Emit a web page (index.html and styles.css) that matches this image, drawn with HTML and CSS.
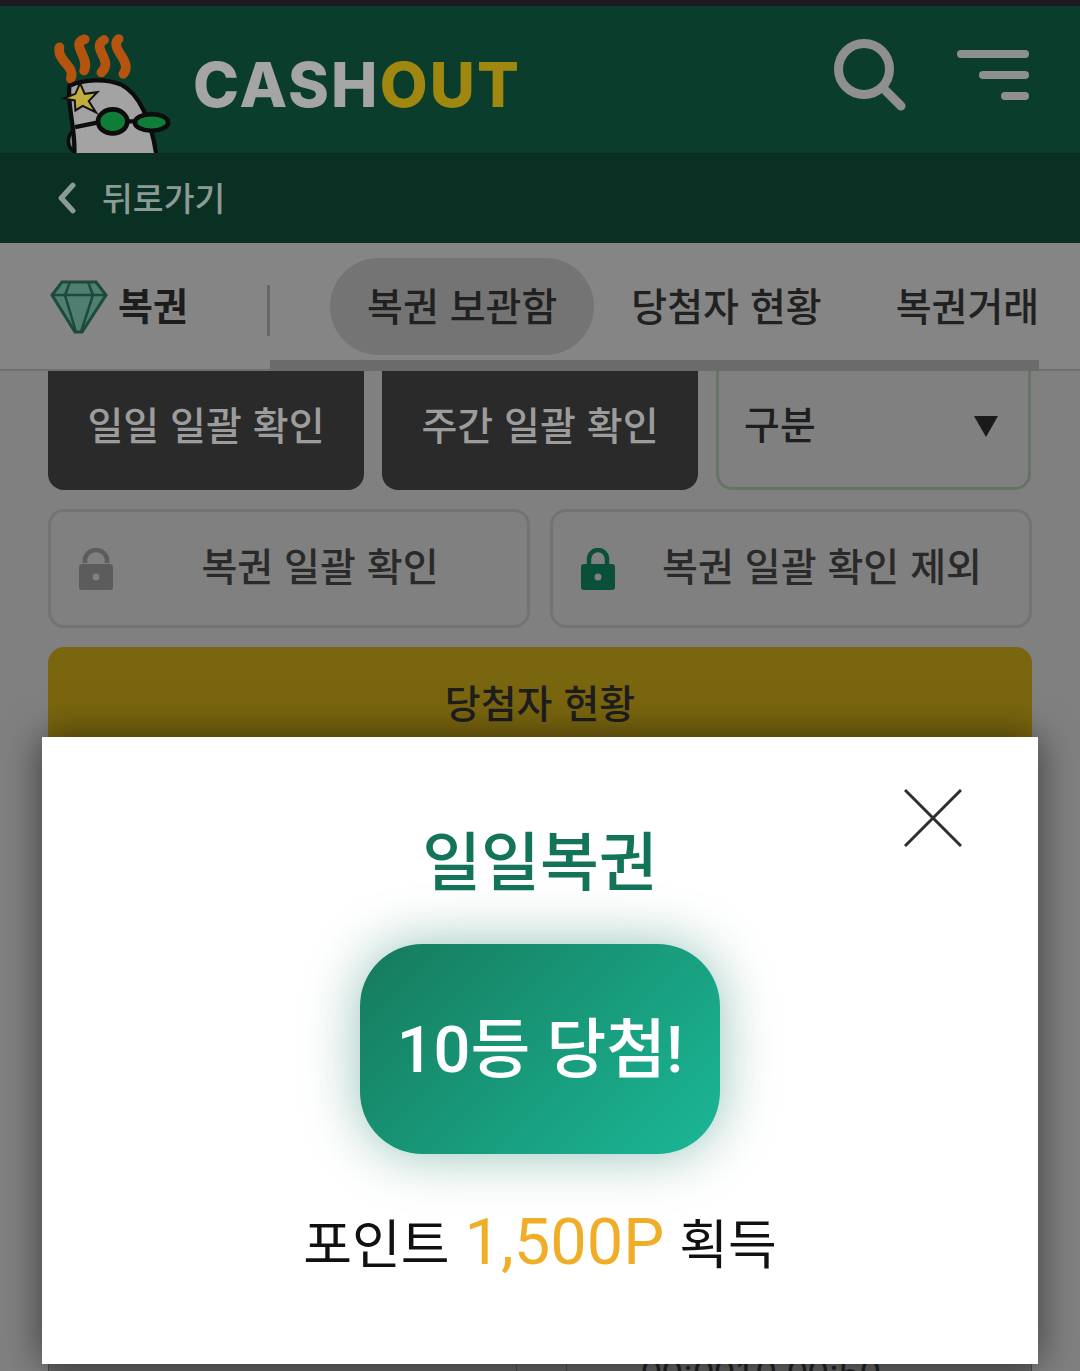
FILE: index.html
```html
<!DOCTYPE html>
<html lang="ko">
<head>
    <meta charset="UTF-8">
    <meta name="viewport" content="width=device-width, initial-scale=1.0">
    <title>CASHOUT 복권</title>
    <link rel="stylesheet" href="styles.css">
</head>
<body>
    <div class="page">
        <div class="status-strip"></div>

        <header class="site-header">
            <svg class="goose" viewBox="0 0 420 400" aria-hidden="true">
                <g fill="none" stroke="#b4540f" stroke-width="29" stroke-linecap="round">
                    <path d="M58 82C48 122 108 140 92 176"/>
                    <path d="M134 58C88 70 152 115 132 152"/>
                    <path d="M192 60C150 85 224 120 184 158"/>
                    <path d="M236 57C205 85 282 125 250 162"/>
                </g>
                <path class="goose-arm" d="M118 400C70 390 80 340 110 325Z"/>
                <path class="goose-head" d="M102 410C110 340 80 260 88 198C130 178 200 175 245 195C295 220 335 300 350 410Z"/>
                <path class="goose-star" d="M120 190L134 222L172 217L146 244L168 278L128 258L106 272L104 242L70 236L106 222Z"/>
                <path class="goose-wire" d="M105 322L175 308M260 305L285 305"/>
                <ellipse class="goose-lens" cx="218" cy="305" rx="44" ry="36"/>
                <ellipse class="goose-lens" cx="335" cy="308" rx="50" ry="25"/>
            </svg>
            <div class="wordmark">CASH<span class="wordmark-out">OUT</span></div>
            <div class="header-actions">
                <svg class="icon-search" viewBox="0 0 72 72" aria-hidden="true">
                    <circle cx="30" cy="30" r="25.5"/>
                    <path d="M51 51L67 67"/>
                </svg>
                <div class="menu-lines">
                    <span class="menu-line menu-line-long"></span>
                    <span class="menu-line menu-line-mid"></span>
                    <span class="menu-line menu-line-short"></span>
                </div>
            </div>
        </header>

        <nav class="back-bar">
            <svg class="icon-back" viewBox="0 0 18 30" aria-hidden="true">
                <path d="M15 3L4 15L15 27"/>
            </svg>
            <span class="back-label">뒤로가기</span>
        </nav>

        <section class="tab-bar">
            <div class="tab-brand">
                <svg class="icon-gem" viewBox="0 0 80 75" aria-hidden="true">
                    <path class="gem-body" d="M22 13H56L66 26L42 63H35L12 26Z"/>
                    <path class="gem-lines" d="M12 26H66M30 13L25 26L36 63M48 13L53 26L41 63"/>
                </svg>
                <strong>복권</strong>
            </div>
            <div class="tab-list">
                <span class="tab tab-active">복권 보관함</span>
                <span class="tab">당첨자 현황</span>
                <span class="tab">복권거래</span>
            </div>
        </section>

        <main class="content">
            <div class="filter-row">
                <button class="dark-btn" type="button">일일 일괄 확인</button>
                <button class="dark-btn" type="button">주간 일괄 확인</button>
                <div class="select-box">
                    <span class="select-label">구분</span>
                    <span class="select-arrow"></span>
                </div>
            </div>

            <div class="lock-row">
                <button class="lock-btn" type="button">
                    <svg class="icon-lock lock-open" viewBox="0 0 34 42" aria-hidden="true">
                        <path class="lock-shackle" d="M6 15V12A11 10 0 0 1 28 12V15"/>
                        <rect class="lock-case" y="16" width="34" height="26" rx="3"/>
                        <circle class="lock-hole" cx="17" cy="29" r="3.5"/>
                    </svg>
                    <span class="lock-label">복권 일괄 확인</span>
                </button>
                <button class="lock-btn" type="button">
                    <svg class="icon-lock lock-closed" viewBox="0 0 34 42" aria-hidden="true">
                        <path class="lock-shackle" d="M8 18V11A9 9 0 0 1 26 11V18"/>
                        <rect class="lock-case" y="16" width="34" height="26" rx="3"/>
                        <circle class="lock-hole" cx="17" cy="29" r="3.5"/>
                    </svg>
                    <span class="lock-label">복권 일괄 확인 제외</span>
                </button>
            </div>

            <div class="winners">
                <div class="winners-head">당첨자 현황</div>
                <div class="winners-row">
                    <span></span>
                    <span></span>
                    <span class="winners-time">00:0010 00:50</span>
                </div>
            </div>
        </main>

        <div class="prize-modal">
            <svg class="modal-close" viewBox="0 0 58 58" aria-hidden="true">
                <path d="M1 1L57 57M57 1L1 57"/>
            </svg>
            <h2 class="prize-title">일일복권</h2>
            <div class="prize-badge">10등 당첨!</div>
            <p class="prize-points">포인트 <span class="prize-amount">1,500P</span> 획득</p>
        </div>
    </div>
</body>
</html>
```

FILE: styles.css
```css
* {
    box-sizing: border-box;
}
body {
    margin: 0;
    background-color: #808080;
    font-family: "Noto Sans CJK KR", "Noto Sans", sans-serif;
    color: #242424;
}
.page {
    position: relative;
    height: 1371px;
    overflow: hidden;
}
.status-strip {
    height: 6px;
    background-color: #1d1b1f;
}

/* header */
.site-header {
    display: flex;
    align-items: flex-start;
    height: 147px;
    padding-left: 40px;
    background-color: #0b3d2d;
}
.goose {
    width: 140px;
    height: 133px;
    margin-top: 14px;
    flex: none;
}
.goose-head {
    fill: #a3a3a3;
    stroke: #0c0c0c;
    stroke-width: 13;
}
.goose-arm {
    fill: #7d8d88;
    stroke: #0c0c0c;
    stroke-width: 11;
}
.goose-star {
    fill: #c2ad3c;
    stroke: #111;
    stroke-width: 6;
}
.goose-wire {
    fill: none;
    stroke: #0c0c0c;
    stroke-width: 13;
}
.goose-lens {
    fill: #0f7d38;
    stroke: #0c0c0c;
    stroke-width: 14;
}
.wordmark {
    margin: 39px 0 0 13px;
    font-family: Inter, sans-serif;
    font-size: 62px;
    font-weight: 800;
    line-height: 80px;
    letter-spacing: 2.2px;
    color: #a5a5a5;
}
.wordmark-out {
    color: #a08810;
}
.header-actions {
    display: flex;
    align-items: flex-start;
    margin-left: auto;
    padding: 33px 51px 0 0;
}
.icon-search {
    width: 72px;
    height: 72px;
    fill: none;
    stroke: #8f8f8f;
    stroke-width: 9;
    stroke-linecap: round;
}
.menu-lines {
    display: flex;
    flex-direction: column;
    align-items: flex-end;
    gap: 13px;
    width: 72px;
    margin: 11px 0 0 51px;
}
.menu-line {
    height: 8px;
    border-radius: 4px;
    background-color: #8f8f8f;
}
.menu-line-long {
    width: 72px;
}
.menu-line-mid {
    width: 50px;
}
.menu-line-short {
    width: 28px;
}

/* back link */
.back-bar {
    display: flex;
    align-items: center;
    gap: 26px;
    height: 90px;
    padding-left: 57px;
    background-color: #0a3023;
    font-size: 33.5px;
    font-weight: 500;
    color: #8b9b95;
}
.back-label {
    margin-bottom: 4px;
}
.icon-back {
    width: 19px;
    height: 32px;
    fill: none;
    stroke: #8b9b95;
    stroke-width: 5;
    stroke-linecap: round;
    stroke-linejoin: round;
}

/* tabs */
.tab-bar {
    display: flex;
    height: 128px;
    padding-left: 40px;
    background-color: #848584;
    border-bottom: 2px solid #707070;
}
.tab-brand {
    position: relative;
    display: flex;
    align-items: center;
    width: 230px;
    font-size: 38px;
    color: #1c1c1c;
}
.tab-brand::after {
    content: "";
    position: absolute;
    right: 0;
    top: 42px;
    width: 3px;
    height: 51px;
    background-color: #666;
}
.tab-brand strong {
    margin: 0 0 5px -2px;
    font-weight: 700;
}
.icon-gem {
    width: 80px;
    height: 75px;
    flex: none;
}
.gem-body {
    fill: #4f7f70;
    stroke: #1c4a3c;
    stroke-width: 3;
}
.gem-lines {
    fill: none;
    stroke: #1c4a3c;
    stroke-width: 2.5;
}
.tab-list {
    display: flex;
    align-items: flex-start;
    width: 769px;
    height: 128px;
    padding: 15px 0 0 60px;
    border-bottom: 11px solid #6b6b6b;
    overflow: hidden;
    flex: none;
    white-space: nowrap;
    font-size: 39px;
    font-weight: 500;
    color: #212121;
}
.tab {
    display: flex;
    align-items: center;
    height: 97px;
    padding: 0 37px 5px;
    flex: none;
}
.tab-active {
    border-radius: 49px;
    background-color: #747474;
}

/* actions */
.content {
    padding: 0 48px;
}
.filter-row {
    display: grid;
    grid-template-columns: 316px 316px 315px;
    gap: 18px;
    height: 119px;
}
.dark-btn {
    padding: 0 0 15px;
    border: none;
    border-radius: 0 0 16px 16px;
    background-color: #2a2a2a;
    font-family: inherit;
    font-size: 39px;
    font-weight: 500;
    color: #9c9c9c;
}
.select-box {
    display: flex;
    align-items: center;
    justify-content: space-between;
    padding: 0 30px 6px 25px;
    border: 3px solid #667466;
    border-top-width: 0;
    border-radius: 0 0 16px 16px;
    font-size: 39px;
    font-weight: 500;
    color: #1e1e1e;
}
.select-label {
    margin-bottom: 8px;
}
.select-arrow {
    width: 0;
    height: 0;
    border-left: 12px solid transparent;
    border-right: 12px solid transparent;
    border-top: 21px solid #1a1a1a;
}
.lock-row {
    display: grid;
    grid-template-columns: 482px 482px;
    gap: 20px;
    margin-top: 19px;
}
.lock-btn {
    display: flex;
    align-items: center;
    height: 119px;
    padding: 0 0 0 28px;
    border: 3px solid #737373;
    border-radius: 16px;
    background: none;
    font-family: inherit;
    font-size: 39px;
    font-weight: 500;
    color: #2a2a2a;
}
.lock-label {
    flex: 1;
    margin-bottom: 9px;
    text-align: center;
}
.icon-lock {
    width: 34px;
    height: 42px;
    flex: none;
}
.lock-shackle {
    fill: none;
    stroke-width: 4.5;
}
.lock-open .lock-shackle {
    stroke: #5c5c5c;
}
.lock-open .lock-case {
    fill: #5c5c5c;
}
.lock-closed .lock-shackle {
    stroke: #0a4f39;
}
.lock-closed .lock-case {
    fill: #0a4f39;
}
.lock-hole {
    fill: #808080;
}
.winners {
    margin-top: 19px;
}
.winners-head {
    display: flex;
    align-items: center;
    justify-content: center;
    height: 112px;
    padding-bottom: 4px;
    border-radius: 16px 16px 0 0;
    background-color: #7a660f;
    font-size: 39px;
    font-weight: 500;
    color: #1e1e1e;
}
.winners-row {
    display: grid;
    grid-template-columns: 467px 50px 1fr;
    height: 640px;
    background-color: #666;
    border: 1px solid #4c4c4c;
    font-family: "Liberation Sans", sans-serif;
    font-size: 37.5px;
    color: #222;
}
.winners-row span + span {
    border-left: 1px solid #4c4c4c;
}
.winners-time {
    padding: 592px 0 0 74px;
    white-space: nowrap;
}

/* prize popup */
.prize-modal {
    position: absolute;
    left: 42px;
    top: 737px;
    display: flex;
    flex-direction: column;
    align-items: center;
    width: 996px;
    height: 627px;
    padding-top: 76px;
    background-color: #fff;
    box-shadow: 0 0 36px rgba(0, 0, 0, 0.55);
}
.modal-close {
    position: absolute;
    right: 76px;
    top: 52px;
    width: 58px;
    height: 58px;
    fill: none;
    stroke: #2e2e2e;
    stroke-width: 3;
}
.prize-title {
    margin: 0;
    font-size: 64px;
    font-weight: 500;
    line-height: 88px;
    color: #14745a;
}
.prize-badge {
    display: flex;
    align-items: center;
    justify-content: center;
    width: 360px;
    height: 210px;
    margin-top: 43px;
    padding-bottom: 11px;
    border-radius: 62px;
    background: linear-gradient(135deg, #167a5c, #1ab897);
    box-shadow: 0 0 55px rgba(20, 120, 95, 0.45);
    font-family: Roboto, "Noto Sans CJK KR", sans-serif;
    font-size: 65px;
    font-weight: 500;
    color: #fff;
}
.prize-points {
    margin: 50px 0 0;
    font-size: 53px;
    line-height: 74px;
    color: #111;
}
.prize-amount {
    font-family: Roboto, sans-serif;
    font-size: 65px;
    color: #f0ae28;
}
```
